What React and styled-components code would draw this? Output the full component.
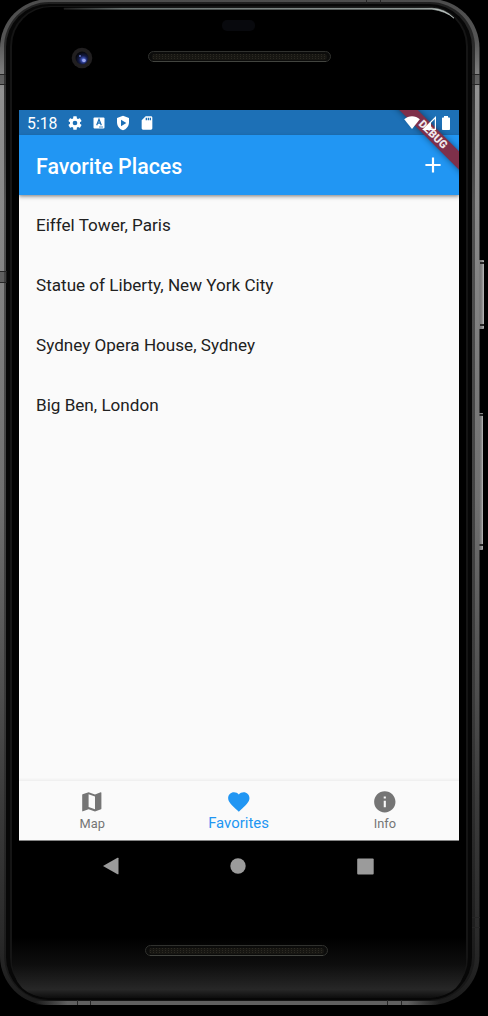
import React from "react";
import styled, { createGlobalStyle } from "styled-components";

const GlobalStyle = createGlobalStyle`
  *, *::before, *::after { box-sizing: border-box; }
  body { margin: 0; background: #000; font-family: Roboto, "Liberation Sans", sans-serif; }
`;

const Device = styled.div`
  position: relative;
  width: 488px;
  height: 1016px;
  padding: 110px 29px 0 19px;
  background: #000;
  overflow: hidden;
`;

const Artwork = styled.svg`
  position: absolute;
  inset: 0;
`;

const Screen = styled.main`
  position: relative;
  display: flex;
  flex-direction: column;
  width: 440px;
  height: 731px;
  background: #fafafa;
  overflow: hidden;
`;

const StatusBar = styled.div`
  display: flex;
  flex: none;
  align-items: center;
  height: 25px;
  padding: 0 5px 0 8px;
  background: #1d70b6;
  color: #fff;
`;

const Clock = styled.span`
  width: 40px;
  font-size: 15.8px;
  line-height: 25px;
  padding-top: 1px;
  white-space: nowrap;
`;

const StatusIcons = styled.div`
  display: flex;
  align-items: center;
  gap: 8px;
`;

const SystemIcons = styled.div`
  position: relative;
  z-index: 3;
  display: flex;
  align-items: center;
  gap: 2px;
  margin-left: auto;
`;

const Icon = styled.svg`
  display: block;
  flex: none;
  width: ${(p) => p.$size}px;
  height: ${(p) => p.$size}px;
  fill: currentColor;
`;

const AppBar = styled.header`
  position: relative;
  z-index: 1;
  display: flex;
  flex: none;
  align-items: center;
  justify-content: space-between;
  height: 60px;
  padding: 0 13px 0 17px;
  background: #2196f3;
  color: #fff;
  box-shadow: 0 2px 4px rgba(0, 0, 0, 0.32), 0 1px 2px rgba(0, 0, 0, 0.15);
`;

const Title = styled.h1`
  margin: 0;
  padding-top: 3px;
  font-size: 21.35px;
  font-weight: 500;
  line-height: 26px;
  white-space: nowrap;
`;

const AddButton = styled.button`
  padding: 0;
  border: 0;
  background: none;
  color: inherit;
`;

const PlaceList = styled.ul`
  flex: 1;
  margin: 0;
  padding: 0;
  list-style: none;
`;

const Place = styled.li`
  display: flex;
  align-items: center;
  height: 60px;
  padding: 0 17px;
  color: #212121;
  font-size: 17.1px;
  white-space: nowrap;
`;

const TabBar = styled.nav`
  display: grid;
  flex: none;
  grid-template-columns: repeat(3, 1fr);
  height: 61px;
  padding-right: 1px;
  border-top: 1px solid #f0f0f0;
  border-bottom: 1px solid #858585;
  box-shadow: 0 -1px 2px rgba(0, 0, 0, 0.04);
`;

const Tab = styled.a`
  display: flex;
  flex-direction: column;
  align-items: center;
  padding-top: 8px;
  color: ${(p) => (p.$active ? "#2196f3" : "#757575")};
`;

const TabLabel = styled.span`
  margin-top: ${(p) => (p.$active ? -1 : 0)}px;
  font-size: ${(p) => (p.$active ? 14.9 : 12.8)}px;
  line-height: 18px;
`;

const Banner = styled.div`
  position: absolute;
  z-index: 2;
  top: 18px;
  left: 354px;
  width: 120px;
  height: 13px;
  transform: rotate(45deg);
  background: #7e304a;
  box-shadow: 0 0 6px rgba(0, 0, 0, 0.45);
  color: #f0e8eb;
  font-size: 11px;
  font-weight: 900;
  line-height: 13px;
  text-align: center;
`;

const NavigationBar = styled.div`
  position: relative;
  display: grid;
  grid-template-columns: 127px 127px 127px;
  justify-content: center;
  justify-items: center;
  align-items: center;
  width: 438px;
  height: 50px;
  color: #9b9b9b;
`;

const paths = {
  gear: "M19.43 12.98c.04-.32.07-.64.07-.98s-.03-.66-.07-.98l2.11-1.65c.19-.15.24-.42.12-.64l-2-3.46c-.12-.22-.39-.3-.61-.22l-2.49 1c-.52-.4-1.08-.73-1.69-.98l-.38-2.65A.49.49 0 0 0 14 2h-4c-.25 0-.46.18-.49.42l-.38 2.65c-.61.25-1.17.59-1.69.98l-2.49-1c-.23-.09-.49 0-.61.22l-2 3.46c-.13.22-.07.49.12.64l2.11 1.65c-.04.32-.07.65-.07.98s.03.66.07.98l-2.11 1.65c-.19.15-.24.42-.12.64l2 3.46c.12.22.39.3.61.22l2.49-1c.52.4 1.08.73 1.69.98l.38 2.65c.03.24.24.42.49.42h4c.25 0 .46-.18.49-.42l.38-2.65c.61-.25 1.17-.59 1.69-.98l2.49 1c.23.09.49 0 .61-.22l2-3.46c.12-.22.07-.49-.12-.64zM12 15.5a3.5 3.5 0 1 1 0-7 3.5 3.5 0 0 1 0 7z",
  shield: "M12 1 3 4.5V11c0 5.55 3.84 10.74 9 12 5.16-1.26 9-6.45 9-12V4.5zM9 7l8 5-8 5z",
  card: "M18 2h-8L4 8v12c0 1.1.9 2 2 2h12c1.1 0 2-.9 2-2V4c0-1.1-.9-2-2-2zm-6 6h-2V4h2zm3 0h-2V4h2zm3 0h-2V4h2z",
  plus: "M19 13h-6v6h-2v-6H5v-2h6V5h2v6h6z",
  map: "m20.5 3-.16.03L15 5.1 9 3 3.36 4.9c-.21.07-.36.25-.36.48V20.5c0 .28.22.5.5.5l.16-.03L9 18.9l6 2.1 5.64-1.9c.21-.07.36-.25.36-.48V3.5c0-.28-.22-.5-.5-.5zM15 19l-6-2.11V5l6 2.11z",
  heart: "m12 21.35-1.45-1.32C5.4 15.36 2 12.28 2 8.5 2 5.42 4.42 3 7.5 3c1.74 0 3.41.81 4.5 2.09C13.09 3.81 14.76 3 16.5 3 19.58 3 22 5.42 22 8.5c0 3.78-3.4 6.86-8.55 11.54z",
  info: "M12 2C6.48 2 2 6.48 2 12s4.48 10 10 10 10-4.48 10-10S17.52 2 12 2zm1 15h-2v-6h2zm0-8h-2V7h2z",
};

const Glyph = ({ name, size }) => (
  <Icon $size={size} viewBox="0 0 24 24"><path fillRule="evenodd" d={paths[name]} /></Icon>
);

const Speaker = ({ x, y }) => (
  <g>
    <rect x={x + 0.5} y={y + 0.5} width="182" height="10" rx="5" fill="#0c0c0b" stroke="#30312e" />
    <rect x={x + 4} y={y + 3} width="175" height="6" rx="3" fill="url(#mesh)" />
    <path d={`M${x + 5} ${y + 10.5}h173`} stroke="#42443f" />
  </g>
);

function PhoneArtwork() {
  return (
    <Artwork width="488" height="1016" viewBox="0 0 488 1016">
      <defs>
        <linearGradient id="rail" x1="0" y1="0" x2="0" y2="1">
          <stop offset="0" stopColor="#4c4c4c" />
          <stop offset=".04" stopColor="#555" />
          <stop offset=".09" stopColor="#929292" />
          <stop offset=".25" stopColor="#868686" />
          <stop offset=".5" stopColor="#707070" />
          <stop offset=".8" stopColor="#3b3b3b" />
          <stop offset=".93" stopColor="#2a2a2a" />
          <stop offset="1" stopColor="#1b1b1b" />
        </linearGradient>
        <linearGradient id="innerRail" x1="0" y1="0" x2="0" y2="1">
          <stop offset="0" stopColor="#202020" />
          <stop offset=".2" stopColor="#505050" />
          <stop offset=".7" stopColor="#3a3a3a" />
          <stop offset="1" stopColor="#151515" />
        </linearGradient>
        <linearGradient id="shine">
          <stop offset="0" stopColor="#222" />
          <stop offset=".15" stopColor="#788280" />
          <stop offset=".9" stopColor="#a3adaa" />
          <stop offset="1" stopColor="#c5cdca" />
        </linearGradient>
        <linearGradient id="bottomEdge">
          <stop offset="0" stopColor="#555" stopOpacity="0" />
          <stop offset=".08" stopColor="#606060" />
          <stop offset=".92" stopColor="#606060" />
          <stop offset="1" stopColor="#555" stopOpacity="0" />
        </linearGradient>
        <linearGradient id="chin" x1="0" y1="0" x2="0" y2="1">
          <stop offset="0" stopColor="#000" />
          <stop offset=".45" stopColor="#0e0e0e" />
          <stop offset=".86" stopColor="#272727" />
          <stop offset="1" stopColor="#0d0d0d" />
        </linearGradient>
        <linearGradient id="key">
          <stop offset="0" stopColor="#666" />
          <stop offset=".65" stopColor="#858585" />
          <stop offset="1" stopColor="#bbb" />
        </linearGradient>
        <pattern id="mesh" width="3" height="2" patternUnits="userSpaceOnUse">
          <rect width="3" height="2" fill="#171612" />
          <rect width="1" height="1" fill="#2b2922" />
        </pattern>
        <radialGradient id="lens" cx=".6" cy=".65" r=".6">
          <stop offset="0" stopColor="#8da1f5" />
          <stop offset=".25" stopColor="#384bab" />
          <stop offset=".55" stopColor="#131a45" />
          <stop offset="1" stopColor="#07080d" />
        </radialGradient>
      </defs>
      <rect x="478" y="260" width="6" height="69" rx="1" fill="url(#key)" />
      <rect x="478" y="413" width="5" height="137" rx="1" fill="url(#key)" />
      <path d="M480 263h4M480 325h4M478 415h5M478 545h5" stroke="#252525" strokeWidth="2" />
      <rect x="0" y="-1" width="479.5" height="1006" rx="49" fill="url(#rail)" />
      <rect x="35" y="1001" width="405" height="4" fill="url(#bottomEdge)" />
      <rect x="4" y="2" width="471" height="999" rx="45" fill="url(#innerRail)" />
      <rect x="6" y="4" width="466" height="996" rx="43" fill="#070707" />
      <rect x="10" y="6" width="458" height="992" rx="40" fill="#151515" />
      <rect x="12" y="7" width="454" height="990" rx="39" fill="#000" />
      <path d="M12 938h454v20q0 39-39 40H51q-39-1-39-40z" fill="url(#chin)" />
      <path d="M64 8.2h368q13 .5 22 10-8-7-22-9H64z" fill="url(#shine)" stroke="url(#shine)" strokeWidth=".6" />
      <path d="M0 74.5h6M0 84.5h6M472 74.5h8M472 84.5h8M0 271.5h7M0 282.5h7M472 917.5h8M472 927.5h8M366.5 0v4M380.5 0v4M77.5 1000v5M90.5 1000v5M387.5 1000v5M401.5 1000v5" stroke="#252525" />
      <path d="M0 75h6v9H0zM472 75h8v9h-8zM0 272h7v10H0z" fill="#343434" opacity=".45" />
      <rect x="222" y="20" width="33" height="11" rx="5" fill="#08090d" />
      <circle cx="82" cy="58" r="10.3" fill="#211f20" />
      <circle cx="82" cy="58" r="6.5" fill="url(#lens)" />
      <circle cx="80" cy="56" r="1" fill="#6171bf" />
      <circle cx="84" cy="60.5" r="1.8" fill="#9aa6ef" />
      <Speaker x={148} y={51} />
      <Speaker x={145} y={945} />
    </Artwork>
  );
}

const places = ["Eiffel Tower, Paris", "Statue of Liberty, New York City", "Sydney Opera House, Sydney", "Big Ben, London"];
const tabs = [
  { label: "Map", icon: "map" },
  { label: "Favorites", icon: "heart", active: true },
  { label: "Info", icon: "info" },
];

export default function App() {
  return (
    <Device>
      <GlobalStyle />
      <PhoneArtwork />
      <Screen>
        <StatusBar>
          <Clock>5:18</Clock>
          <StatusIcons>
            <Glyph name="gear" size={16} />
            <Icon $size={16} viewBox="0 0 16 16">
              <rect x="2.5" y="2.5" width="11" height="11" rx="1" />
              <path d="m5.7 10.2 2.3-6 2.3 6M6.5 8.2h3" fill="none" stroke="#1d70b6" strokeWidth="1.25" />
              <path d="M8 12h4" stroke="#1d70b6" strokeWidth=".8" />
            </Icon>
            <Glyph name="shield" size={16} />
            <Glyph name="card" size={16} />
          </StatusIcons>
          <SystemIcons>
            <Icon $size={16} viewBox="0 0 16 16"><path d="M.2 4.2C2.6 2.3 5 1.3 8 1.3s5.4 1 7.8 2.9L8 14z" /></Icon>
            <Icon $size={14} viewBox="0 0 14 14">
              <path fillRule="evenodd" d="M14 0v14H0zm-1.2 3L9 6.8v6h3.8z" />
            </Icon>
            <Icon $size={16} viewBox="0 0 16 16"><path d="M6 1h4v1.5h1.2q.8 0 .8.8v10.9q0 .8-.8.8H4.8q-.8 0-.8-.8V3.3q0-.8.8-.8H6z" /></Icon>
          </SystemIcons>
        </StatusBar>
        <AppBar>
          <Title>Favorite Places</Title>
          <AddButton aria-label="Add place"><Glyph name="plus" size={26} /></AddButton>
        </AppBar>
        <PlaceList>{places.map((place) => <Place key={place}>{place}</Place>)}</PlaceList>
        <TabBar>
          {tabs.map(({ label, icon, active }) => (
            <Tab key={label} $active={active}>
              <Glyph name={icon} size={25.6} />
              <TabLabel $active={active}>{label}</TabLabel>
            </Tab>
          ))}
        </TabBar>
        <Banner>DEBUG</Banner>
      </Screen>
      <NavigationBar>
        <Icon $size={18} viewBox="0 0 18 18"><path d="M1 9 15.5.8q1-.5 1 .5v15.4q0 1-1 .5z" /></Icon>
        <Icon $size={16} viewBox="0 0 16 16"><circle cx="8" cy="8" r="7.7" /></Icon>
        <Icon $size={17} viewBox="0 0 17 17"><rect x=".2" y=".5" width="16.5" height="16" rx="1" /></Icon>
      </NavigationBar>
    </Device>
  );
}
